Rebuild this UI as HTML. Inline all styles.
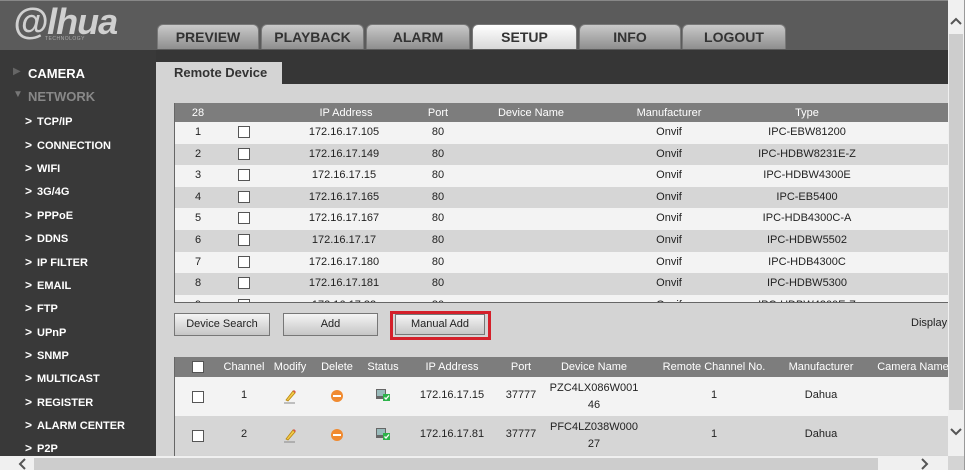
<!DOCTYPE html>
<html><head><meta charset="utf-8"><style>
*{margin:0;padding:0;box-sizing:border-box}
body{width:967px;height:470px;overflow:hidden;position:relative;background:#d4d4d4;font-family:"Liberation Sans",Arial,sans-serif;font-size:11px;color:#222}
.a{position:absolute}
#hdr{left:0;top:0;width:948px;height:50px;background:#5b5b5b;border-top:1px solid #888}
.tab{position:absolute;top:24px;height:25px;border-radius:6px 6px 0 0;background:linear-gradient(#c9c9c9,#8e8e8e);border:1px solid #777;border-bottom:none;font-size:14px;font-weight:bold;color:#333;text-align:center;line-height:24px}
.tab.on{background:linear-gradient(#fff,#d8d8d8)}
#band{left:156px;top:50px;width:792px;height:34px;background:#363636}
#side{left:0;top:50px;width:156px;height:406px;background:#393939}
.si{position:absolute;left:25px;color:#fff;font-size:11px;font-weight:bold}
.si b{display:inline-block;width:12px;font-size:12px}
.th{position:absolute;height:20px;background:#7d7d7d;color:#fff;font-size:11px;line-height:20px}
.c{position:absolute;transform:translateX(-50%);white-space:nowrap;text-align:center}
.row{position:absolute;left:174px;width:774px}
.cb{position:absolute;width:12px;height:12px;border:1px solid #555;background:#fff;transform:translateX(-50%)}
.btn{position:absolute;top:313px;height:23px;border:1px solid #777;background:linear-gradient(#f4f4f4,#c6c6c6);font-size:11px;text-align:center;line-height:21px;color:#222}
</style></head><body>
<div id="hdr" class="a"></div>
<div class="a" style="left:13px;top:3px;font-size:36px;font-weight:bold;font-style:italic;color:#d0d0d0;letter-spacing:-1px;line-height:38px">@lhua</div>
<div class="a" style="left:45px;top:36px;font-size:5px;color:#aaa;letter-spacing:0.5px">TECHNOLOGY</div>
<div class="tab" style="left:157px;width:102px">PREVIEW</div>
<div class="tab" style="left:261px;width:103px">PLAYBACK</div>
<div class="tab" style="left:366px;width:104px">ALARM</div>
<div class="tab on" style="left:472px;width:105px">SETUP</div>
<div class="tab" style="left:579px;width:102px">INFO</div>
<div class="tab" style="left:682px;width:104px">LOGOUT</div>
<div id="band" class="a"></div>
<div class="a" style="left:156px;top:62px;width:126px;height:22px;background:#d4d4d4;font-size:13px;font-weight:bold;color:#333;padding:3px 0 0 18px">Remote Device</div>
<div id="side" class="a"></div>
<div class="a" style="left:13px;top:66px;color:#666;font-size:10px">▶</div>
<div class="a" style="left:28px;top:66px;color:#fff;font-size:13px;font-weight:bold">CAMERA</div>
<div class="a" style="left:13px;top:89px;color:#777;font-size:10px">▼</div>
<div class="a" style="left:28px;top:89px;color:#888;font-size:13px;font-weight:bold">NETWORK</div>
<div class="si" style="top:114px"><b>&gt;</b>TCP/IP</div>
<div class="si" style="top:138px"><b>&gt;</b>CONNECTION</div>
<div class="si" style="top:161px"><b>&gt;</b>WIFI</div>
<div class="si" style="top:184px"><b>&gt;</b>3G/4G</div>
<div class="si" style="top:208px"><b>&gt;</b>PPPoE</div>
<div class="si" style="top:231px"><b>&gt;</b>DDNS</div>
<div class="si" style="top:255px"><b>&gt;</b>IP FILTER</div>
<div class="si" style="top:278px"><b>&gt;</b>EMAIL</div>
<div class="si" style="top:301px"><b>&gt;</b>FTP</div>
<div class="si" style="top:325px"><b>&gt;</b>UPnP</div>
<div class="si" style="top:348px"><b>&gt;</b>SNMP</div>
<div class="si" style="top:371px"><b>&gt;</b>MULTICAST</div>
<div class="si" style="top:395px"><b>&gt;</b>REGISTER</div>
<div class="si" style="top:418px"><b>&gt;</b>ALARM CENTER</div>
<div class="si" style="top:441px"><b>&gt;</b>P2P</div>

<div class="a" style="left:174px;top:103px;width:774px;height:200px;border-left:1px solid #666;border-bottom:1px solid #666;overflow:hidden">
<div class="th" style="left:0;top:0;width:774px">
<span class="c" style="left:23px">28</span><span class="c" style="left:171px">IP Address</span><span class="c" style="left:263px">Port</span><span class="c" style="left:356px">Device Name</span><span class="c" style="left:494px">Manufacturer</span><span class="c" style="left:632px">Type</span></div>
</div>
<div id="t1"></div>

<div class="btn" style="left:174px;width:96px">Device Search</div>
<div class="btn" style="left:283px;width:95px">Add</div>
<div class="a" style="left:390px;top:311px;width:101px;height:29px;border:3px solid #d4202a"></div>
<div class="btn" style="left:395px;width:90px;top:314px;height:21px;line-height:19px">Manual Add</div>
<div class="a" style="left:911px;top:317px">Display</div>

<div class="a" style="left:174px;top:357px;width:774px;height:99px;border-left:1px solid #666;overflow:hidden">
<div class="th" style="left:0;top:0;width:774px">
<span class="cb" style="left:23px;top:4px"></span>
<span class="c" style="left:69px">Channel</span><span class="c" style="left:115px">Modify</span><span class="c" style="left:162px">Delete</span><span class="c" style="left:208px">Status</span><span class="c" style="left:277px">IP Address</span><span class="c" style="left:346px">Port</span><span class="c" style="left:419px">Device Name</span><span class="c" style="left:539px">Remote Channel No.</span><span class="c" style="left:646px">Manufacturer</span><span class="c" style="left:738px">Camera Name</span></div>
</div>
<div id="t2"></div>

<div class="a" style="left:948px;top:0;width:16px;height:456px;background:#f0f0f0"></div>
<div class="a" style="left:949px;top:34px;width:14px;height:376px;background:#cdcdcd"></div>
<svg class="a" style="left:950px;top:16px" width="12" height="10"><path d="M1 8 L6 3 L11 8" stroke="#555" stroke-width="2" fill="none"/></svg>
<svg class="a" style="left:950px;top:427px" width="12" height="10"><path d="M1 2 L6 7 L11 2" stroke="#555" stroke-width="2" fill="none"/></svg>
<div class="a" style="left:964px;top:0;width:3px;height:470px;background:#fff;border-left:1px solid #999"></div>
<div class="a" style="left:0;top:456px;width:948px;height:14px;background:#f0f0f0"></div>
<div class="a" style="left:34px;top:458px;width:844px;height:12px;background:#cdcdcd"></div>
<svg class="a" style="left:17px;top:458px" width="10" height="12"><path d="M8 1 L3 6 L8 11" stroke="#555" stroke-width="2" fill="none"/></svg>
<svg class="a" style="left:920px;top:458px" width="10" height="12"><path d="M2 1 L7 6 L2 11" stroke="#555" stroke-width="2" fill="none"/></svg>

<script>
var d=[["1","172.16.17.105","IPC-EBW81200"],["2","172.16.17.149","IPC-HDBW8231E-Z"],["3","172.16.17.15","IPC-HDBW4300E"],["4","172.16.17.165","IPC-EB5400"],["5","172.16.17.167","IPC-HDB4300C-A"],["6","172.16.17.17","IPC-HDBW5502"],["7","172.16.17.180","IPC-HDB4300C"],["8","172.16.17.181","IPC-HDBW5300"],["9","172.16.17.82","IPC-HDBW4300E-Z"]];
var h="";
d.forEach(function(r,i){var t=122+i*21.6;var hh=i==8?302-t:21.6;if(hh<=0)return;
h+='<div class="row" style="top:'+t+'px;height:'+hh+'px;overflow:hidden;background:'+(i%2?'#d6d6d6':'#f3f3f3')+';border-left:1px solid #666">'+
'<span class="c" style="left:23px;top:4px">'+r[0]+'</span><span class="cb" style="left:69px;top:4px"></span><span class="c" style="left:169px;top:4px">'+r[1]+'</span><span class="c" style="left:263px;top:4px">80</span><span class="c" style="left:494px;top:4px">Onvif</span><span class="c" style="left:632px;top:4px">'+r[2]+'</span></div>';});
document.getElementById("t1").innerHTML=h;
var e=[["1","172.16.17.15","PZC4LX086W001","46"],["2","172.16.17.81","PFC4LZ038W000","27"]];h="";
var pen='<svg width="14" height="16" viewBox="0 0 14 16"><path d="M3 12 L10 3 L12 5 L5 13 Z" fill="#f2c94c" stroke="#b8860b" stroke-width="0.8"/><path d="M10 3 L12 5 L13 4 L11 2Z" fill="#d9534f"/><path d="M1 15 H12" stroke="#888"/></svg>';
var del='<svg width="14" height="14"><circle cx="7" cy="7" r="6" fill="#f08a30"/><rect x="3" y="6" width="8" height="2" fill="#fff"/></svg>';
var st='<svg width="16" height="14"><rect x="1" y="1" width="10" height="10" fill="#666"/><rect x="2" y="2" width="8" height="6" fill="#9bb"/><rect x="8" y="6" width="7" height="7" fill="#2db34a"/><path d="M9.5 9.5 L11 11 L14 7.5" stroke="#fff" fill="none" stroke-width="1.3"/></svg>';
e.forEach(function(r,i){var t=377+i*39;
h+='<div class="row" style="top:'+t+'px;height:39px;background:'+(i%2?'#d6d6d6':'#f3f3f3')+';border-left:1px solid #666">'+
'<span class="cb" style="left:23px;top:14px"></span><span class="c" style="left:69px;top:12px">'+r[0]+'</span><span class="c" style="left:115px;top:11px">'+pen+'</span><span class="c" style="left:162px;top:12px">'+del+'</span><span class="c" style="left:208px;top:11px">'+st+'</span><span class="c" style="left:277px;top:12px">'+r[1]+'</span><span class="c" style="left:346px;top:12px">37777</span><span class="c" style="left:419px;top:3px;line-height:17px">'+r[2]+'<br>'+r[3]+'</span><span class="c" style="left:539px;top:12px">1</span><span class="c" style="left:646px;top:12px">Dahua</span></div>';});
document.getElementById("t2").innerHTML=h;
</script>
</body></html>
